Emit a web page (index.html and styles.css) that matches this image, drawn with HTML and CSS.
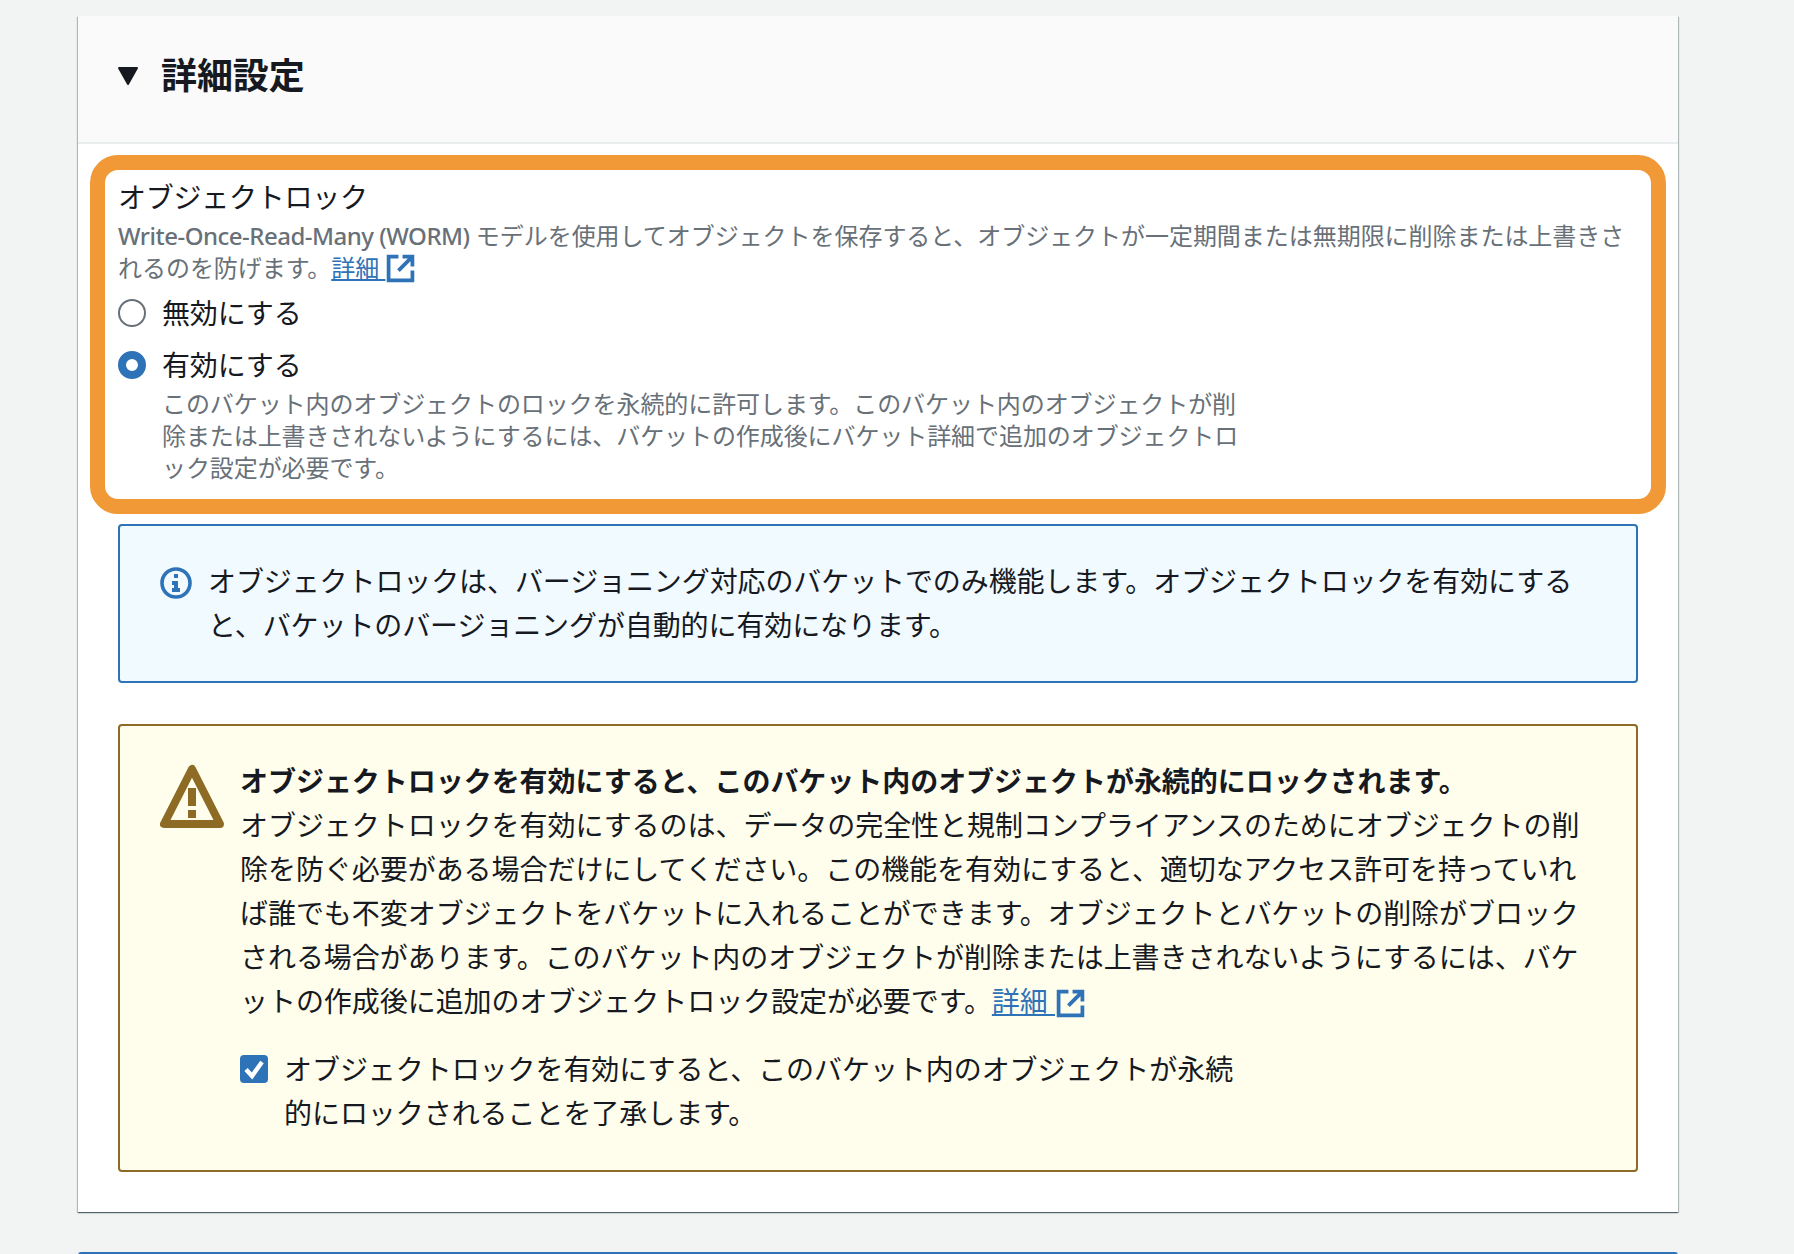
FILE: index.html
```html
<!DOCTYPE html>
<html lang="ja">
<head>
<meta charset="utf-8">
<title>詳細設定</title>
<link rel="stylesheet" href="styles.css">
</head>
<body>
<main class="page">
  <section class="card">
    <header class="card-head">
      <svg class="caret" viewBox="0 0 22 20"><path d="M2 2h18L11 18z" fill="#16191f" stroke="#16191f" stroke-width="2" stroke-linejoin="round"/></svg>
      <h2 class="card-title">詳細設定</h2>
    </header>
    <div class="card-body">
      <div class="highlight"></div>
      <div class="field">
        <div class="field-label">オブジェクトロック</div>
        <p class="field-desc"><span class="latin">Write-Once-Read-Many (WORM)</span> モデルを使用してオブジェクトを保存すると、オブジェクトが一定期間または無期限に削除または上書きさ<br>れるのを防げます。<a class="link" href="#">詳細 </a><svg class="ext" viewBox="0 0 28 28"><path d="M12 2.5H2.5v23h23V16M16 2.5h9.5V12M25 3L12 16" fill="none" stroke="#2e72b8" stroke-width="3.6"/></svg></p>
        <div class="radio-row">
          <span class="radio"></span>
          <span class="radio-text">無効にする</span>
        </div>
        <div class="radio-row radio-row-on">
          <span class="radio radio-on"></span>
          <span class="radio-text">有効にする</span>
        </div>
        <p class="radio-desc">このバケット内のオブジェクトのロックを永続的に許可します。このバケット内のオブジェクトが削<br>除または上書きされないようにするには、バケットの作成後にバケット詳細で追加のオブジェクトロ<br>ック設定が必要です。</p>
      </div>

      <div class="alert alert-info">
        <svg class="alert-icon-info" viewBox="0 0 32 36"><circle cx="16" cy="18" r="14" fill="none" stroke="#2e72b8" stroke-width="3.6"/><path d="M14 9h4v4h-4zM12 16h6v7h2v4h-8v-4h2v-3h-2z" fill="#2e72b8"/></svg>
        <p class="alert-text">オブジェクトロックは、バージョニング対応のバケットでのみ機能します。オブジェクトロックを有効にする<br>と、バケットのバージョニングが自動的に有効になります。</p>
      </div>

      <div class="alert alert-warn">
        <svg class="alert-icon-warn" viewBox="0 0 64 64"><path d="M32 5L4 60h56z" fill="none" stroke="#8d6b25" stroke-width="8" stroke-linejoin="round"/><path d="M28 24h8v18h-8zM28 46h8v8h-8z" fill="#8d6b25"/></svg>
        <div class="warn-content">
          <p class="alert-text"><strong class="warn-title">オブジェクトロックを有効にすると、このバケット内のオブジェクトが永続的にロックされます。</strong><br>オブジェクトロックを有効にするのは、データの完全性と規制コンプライアンスのためにオブジェクトの削<br>除を防ぐ必要がある場合だけにしてください。この機能を有効にすると、適切なアクセス許可を持っていれ<br>ば誰でも不変オブジェクトをバケットに入れることができます。オブジェクトとバケットの削除がブロック<br>される場合があります。このバケット内のオブジェクトが削除または上書きされないようにするには、バケ<br>ットの作成後に追加のオブジェクトロック設定が必要です。<a class="link" href="#">詳細 </a><svg class="ext" viewBox="0 0 28 28"><path d="M12 2.5H2.5v23h23V16M16 2.5h9.5V12M25 3L12 16" fill="none" stroke="#2e72b8" stroke-width="3.6"/></svg></p>
          <div class="check-row">
            <span class="check"><svg viewBox="0 0 28 28"><path d="M6 14.5l6 6.5 10-14" fill="none" stroke="#fff" stroke-width="4.4"/></svg></span>
            <span class="check-text">オブジェクトロックを有効にすると、このバケット内のオブジェクトが永続<br>的にロックされることを了承します。</span>
          </div>
        </div>
      </div>
    </div>
  </section>
  <div class="next-card"></div>
</main>
</body>
</html>
```

FILE: styles.css
```css
* { box-sizing: border-box; }
html, body { margin: 0; height: 100%; }
body {
  background: #f2f3f3;
  color: #16191f;
  font-family: "Noto Sans", "Noto Sans CJK JP", sans-serif;
  overflow: hidden;
}
p { margin: 0; }
.page { width: 1600px; margin-left: 78px; padding-top: 16px; }
.card {
  background: #fff;
  box-shadow: 0 1px 1px 0 rgba(0, 28, 36, .45), 1px 1px 1px 0 rgba(0, 28, 36, .22), -1px 1px 1px 0 rgba(0, 28, 36, .22);
}
.card-head {
  height: 128px;
  background: #fafafa;
  border-bottom: 2px solid #eaeded;
  display: flex;
  align-items: center;
  padding: 0 0 6px 39px;
}
.caret { width: 22px; height: 20px; margin-right: 22px; }
.card-title { margin: 0; font-size: 36px; font-weight: 700; line-height: 44px; letter-spacing: -.1px; }
.card-body { position: relative; padding: 33px 40px 40px; }
.highlight {
  position: absolute;
  left: 12px; right: 12px; top: 11px;
  height: 359px;
  border: 15px solid #f19837;
  border-radius: 28px;
  pointer-events: none;
}
.field-label { font-size: 28px; line-height: 40px; letter-spacing: -.25px; }
.field-desc { margin-top: 3px; font-size: 24px; line-height: 32px; color: #687078; letter-spacing: -.04px; }
.latin { font-weight: 500; letter-spacing: -.5px; }
.link { color: #2e72b8; text-decoration: underline; }
.ext { width: 29px; height: 29px; vertical-align: -6px; margin-left: 1px; }
.radio-row { display: flex; align-items: center; margin-top: 9px; height: 40px; }
.radio-row-on { margin-top: 12px; }
.radio {
  width: 28px; height: 28px; margin-right: 16px; flex: none;
  border: 2px solid #687078; border-radius: 50%;
}
.radio-on { border: 8px solid #2e72b8; }
.radio-text { font-size: 28px; line-height: 40px; letter-spacing: -.15px; }
.radio-desc { margin: 3px 0 0 44px; font-size: 24px; line-height: 32px; color: #687078; letter-spacing: -.08px; }
.alert { display: flex; border: 2px solid; border-radius: 4px; }
.alert-info {
  margin-top: 40px;
  height: 159px;
  padding: 33px 40px 0;
  background: #f1faff;
  border-color: #2e72b8;
}
.alert-warn {
  margin-top: 41px;
  height: 448px;
  padding: 33px 40px 0;
  background: #fffeec;
  border-color: #8d6b25;
}
.alert-icon-info { width: 32px; height: 36px; margin: 6px 16px 0 0; flex: none; }
.alert-icon-warn { width: 64px; height: 66px; margin: 4px 16px 0 0; flex: none; }
.alert-text { font-size: 28px; line-height: 44px; }
.alert-info .alert-text { letter-spacing: -.1px; }
.alert-warn .alert-text { letter-spacing: -.05px; }
.warn-title { font-weight: 700; letter-spacing: -.04px; }
.check-row { display: flex; margin-top: 24px; }
.check {
  width: 28px; height: 28px; margin: 8px 16px 0 0; flex: none;
  background: #2e72b8; border-radius: 4px;
}
.check svg { display: block; width: 28px; height: 28px; }
.check-text { font-size: 28px; line-height: 44px; letter-spacing: -.06px; }
.next-card { margin-top: 40px; height: 8px; background: #fff; border-top: 2px solid #2e72b8; border-radius: 3px 3px 0 0; }
```
